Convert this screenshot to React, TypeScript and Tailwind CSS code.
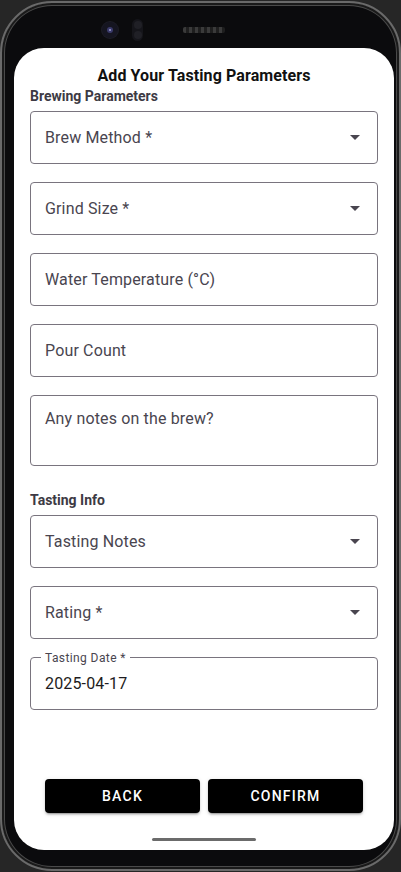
import React from "react";

const font = "font-['Roboto','Noto_Sans',sans-serif]";

function Arrow() {
  return (
    <svg width="10" height="5" viewBox="0 0 10 5" className="shrink-0">
      <path d="M0 0 L5 5 L10 0 Z" fill="#49454f" />
    </svg>
  );
}

function SelectField({ label }: { label: string }) {
  return (
    <div className="h-[53px] rounded-[4px] border border-[#79747e] flex items-center pl-[14px] pr-[17px]">
      <span className="flex-1 text-[16px] leading-6 tracking-[0.15px] text-[#49454f]">{label}</span>
      <Arrow />
    </div>
  );
}

function TextField({ label }: { label: string }) {
  return (
    <div className="h-[53px] rounded-[4px] border border-[#79747e] flex items-center pl-[14px] pr-[14px]">
      <span className="text-[16px] leading-6 tracking-[0.15px] text-[#49454f]">{label}</span>
    </div>
  );
}

export default function App() {
  return (
    <div className={`w-[401px] h-[872px] bg-[#262626] overflow-hidden ${font}`}>
      <div className="mt-[1px] h-[870px] rounded-[52px] border-2 border-[#6a6a6a] bg-[#0b0b0d] shadow-[inset_0_0_0_2px_#1a1a1a,inset_0_0_0_3px_#4a4a4a] flex flex-col pl-[12px] pr-[5px] pb-[19px]">
        <div className="h-[45px] flex items-start shrink-0">
          <div className="ml-[88px] mt-[19px] w-4 h-4 rounded-full bg-[#151520] flex items-center justify-center shadow-[0_0_0_1px_#1c1c24]">
            <div className="w-[6px] h-[6px] rounded-full bg-[#3a3a6a] flex items-center justify-center">
              <div className="w-[2px] h-[2px] rounded-full bg-[#a0a0d0]" />
            </div>
          </div>
          <div className="ml-[14px] mt-[16px] w-[11px] h-[22px] rounded-full bg-[#15151a] flex flex-col items-center justify-around py-[1px]">
            <div className="w-[8px] h-[8px] rounded-full bg-[#202026]" />
            <div className="w-[8px] h-[8px] rounded-full bg-[#202026]" />
          </div>
          <div className="ml-[40px] mt-[24px] w-[42px] h-[6px] rounded-[2px] bg-[repeating-linear-gradient(90deg,#3a3a3a_0px,#3a3a3a_3px,#1e1e1e_3px,#1e1e1e_6px)]" />
        </div>
        <div className="flex-1 bg-white rounded-[30px] flex flex-col overflow-hidden">
          <div className="pt-[17px] text-center text-[16px] leading-[22px] font-bold tracking-[0.1px] text-[#111111]">
            Add Your Tasting Parameters
          </div>
          <div className="px-4 flex flex-col">
            <div className="text-[14px] leading-[18px] font-bold text-[#3d3a44]">Brewing Parameters</div>
            <div className="mt-[6px] flex flex-col gap-[18px]">
              <SelectField label="Brew Method *" />
              <SelectField label="Grind Size *" />
              <TextField label="Water Temperature (°C)" />
              <TextField label="Pour Count" />
              <div className="h-[71px] rounded-[4px] border border-[#79747e] pl-[14px] pr-[14px] pt-[11px]">
                <span className="text-[16px] leading-6 tracking-[0.15px] text-[#49454f]">Any notes on the brew?</span>
              </div>
            </div>
            <div className="mt-[25px] text-[14px] leading-[18px] font-bold text-[#3d3a44]">Tasting Info</div>
            <div className="mt-[6px] flex flex-col gap-[18px]">
              <SelectField label="Tasting Notes" />
              <SelectField label="Rating *" />
              <div className="relative h-[53px] rounded-[4px] border border-[#79747e] flex items-center pl-[14px] pr-[14px]">
                <span className="absolute left-[10px] top-0 -translate-y-1/2 bg-white px-[4px] text-[12px] leading-[12px] tracking-[0.4px] text-[#49454f]">
                  Tasting Date *
                </span>
                <span className="text-[16px] leading-6 tracking-[0.15px] text-[#1d1b20]">2025-04-17</span>
              </div>
            </div>
          </div>
          <div className="flex-1" />
          <div className="flex justify-center gap-2">
            <button className="w-[155px] h-[34px] rounded-[4px] bg-black text-white text-[14px] font-medium tracking-[1.25px] shadow-[0_3px_1px_-2px_rgba(0,0,0,0.2),0_2px_2px_0_rgba(0,0,0,0.14),0_1px_5px_0_rgba(0,0,0,0.12)]">
              BACK
            </button>
            <button className="w-[155px] h-[34px] rounded-[4px] bg-black text-white text-[14px] font-medium tracking-[1.25px] shadow-[0_3px_1px_-2px_rgba(0,0,0,0.2),0_2px_2px_0_rgba(0,0,0,0.14),0_1px_5px_0_rgba(0,0,0,0.12)]">
              CONFIRM
            </button>
          </div>
          <div className="mt-[25px] mb-[9px] mx-auto w-[104px] h-[3px] rounded-full bg-[#6b6b6b]" />
        </div>
      </div>
    </div>
  );
}
